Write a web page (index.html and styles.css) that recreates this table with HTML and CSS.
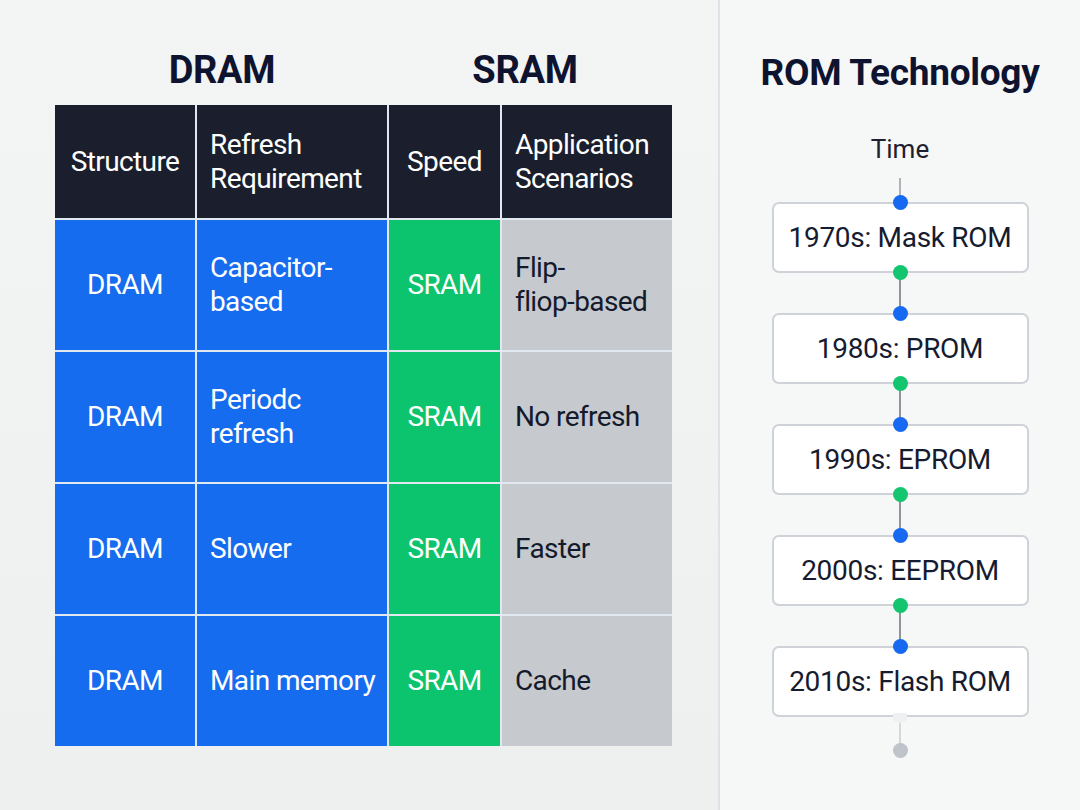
FILE: index.html
```html
<!DOCTYPE html>
<html>
<head>
<meta charset="utf-8">
<link rel="stylesheet" href="styles.css">
</head>
<body>
<div class="page">
  <section class="left">
    <div class="titles">
      <h2 class="title t-dram">DRAM</h2>
      <h2 class="title t-sram">SRAM</h2>
    </div>
    <div class="table">
      <div class="cell head center">Structure</div>
      <div class="cell head">Refresh Requirement</div>
      <div class="cell head center">Speed</div>
      <div class="cell head">Application Scenarios</div>

      <div class="cell blue center">DRAM</div>
      <div class="cell blue">Capacitor-<br>based</div>
      <div class="cell green center">SRAM</div>
      <div class="cell gray">Flip-<br>fliop-based</div>

      <div class="cell blue center">DRAM</div>
      <div class="cell blue">Periodc<br>refresh</div>
      <div class="cell green center">SRAM</div>
      <div class="cell gray">No refresh</div>

      <div class="cell blue center">DRAM</div>
      <div class="cell blue">Slower</div>
      <div class="cell green center">SRAM</div>
      <div class="cell gray">Faster</div>

      <div class="cell blue center">DRAM</div>
      <div class="cell blue nowrap">Main memory</div>
      <div class="cell green center">SRAM</div>
      <div class="cell gray">Cache</div>
    </div>
  </section>
  <section class="right">
    <h2 class="rom-title">ROM Technology</h2>
    <div class="time">Time</div>
    <div class="timeline">
      <div class="line lead"></div>
      <div class="era">1970s: Mask ROM</div>
      <div class="line"></div>
      <div class="era">1980s: PROM</div>
      <div class="line"></div>
      <div class="era">1990s: EPROM</div>
      <div class="line"></div>
      <div class="era">2000s: EEPROM</div>
      <div class="line"></div>
      <div class="era last">2010s: Flash ROM</div>
      <div class="line faint"></div>
      <div class="end-dot"></div>
    </div>
  </section>
</div>
</body>
</html>
```
FILE: styles.css
```css
* { box-sizing: border-box; }
html, body { margin: 0; padding: 0; }
body {
  width: 1080px;
  height: 810px;
  overflow: hidden;
  font-family: Roboto, "Liberation Sans", sans-serif;
  background: #f1f2f2;
}
.page {
  display: flex;
  width: 1080px;
  height: 810px;
}
.left {
  width: 718px;
  padding: 47px 0 0 55px;
  background: linear-gradient(180deg, #f3f4f4 0%, #eeefef 100%);
}
.titles {
  display: flex;
  width: 617px;
  height: 58px;
}
.title {
  margin: 0;
  font-size: 38px;
  font-weight: 700;
  color: #0e1430;
  line-height: 46px;
  text-align: center;
  letter-spacing: -0.3px;
}
.t-dram { width: 334px; }
.t-sram { width: 272px; margin-left: 0; }
.table {
  display: grid;
  grid-template-columns: 140px 190px 111px 170px;
  grid-template-rows: 113px 130px 130px 130px 130px;
  gap: 2px;
  width: 617px;
  background: #e2e8f0;
}
.cell {
  display: flex;
  align-items: center;
  padding: 0 8px 0 13px;
  font-size: 28px;
  line-height: 34px;
  color: #ffffff;
  letter-spacing: -0.6px;
}
.cell.nowrap { white-space: nowrap; padding-right: 0; }
.cell.center { justify-content: center; padding: 0; }
.head { background: #1b1f2d; }
.blue { background: #166cee; }
.green { background: #0cc46d; }
.gray { background: #c6c9cd; color: #141a2c; }
.right {
  flex: 1;
  border-left: 2px solid #dfe2e6;
  background: #f6f7f7;
  display: flex;
  flex-direction: column;
  align-items: center;
  padding-top: 49px;
}
.rom-title {
  margin: 0;
  font-size: 37px;
  font-weight: 700;
  color: #0e1430;
  line-height: 47px;
  letter-spacing: -0.3px;
}
.time {
  margin-top: 38px;
  margin-bottom: 14px;
  font-size: 26px;
  line-height: 30px;
  color: #1c2030;
}
.timeline {
  display: flex;
  flex-direction: column;
  align-items: center;
}
.line {
  width: 2px;
  height: 40px;
  background: #8f939a;
}
.line.lead { height: 24px; background: #b0b4ba; }
.line.faint { height: 28px; background: #d4d7dc; }
.era {
  position: relative;
  width: 257px;
  height: 71px;
  display: flex;
  align-items: center;
  justify-content: center;
  background: #ffffff;
  border: 2px solid #cfd2d8;
  border-radius: 7px;
  font-size: 28px;
  color: #161b30;
  letter-spacing: -0.3px;
}
.era::before, .era::after {
  content: "";
  position: absolute;
  left: 50%;
  width: 15px;
  height: 15px;
  margin-left: -7.5px;
  border-radius: 50%;
}
.era::before { top: -9px; background: #1669f0; }
.era::after { bottom: -9px; background: #13c56f; }
.era.last::after {
  width: 14px;
  height: 10px;
  bottom: -8px;
  background: #eef0f2;
  border-radius: 0 0 50% 50%;
}
.end-dot {
  width: 15px;
  height: 15px;
  border-radius: 50%;
  background: #bfc3ca;
  margin-top: -2px;
}
```
